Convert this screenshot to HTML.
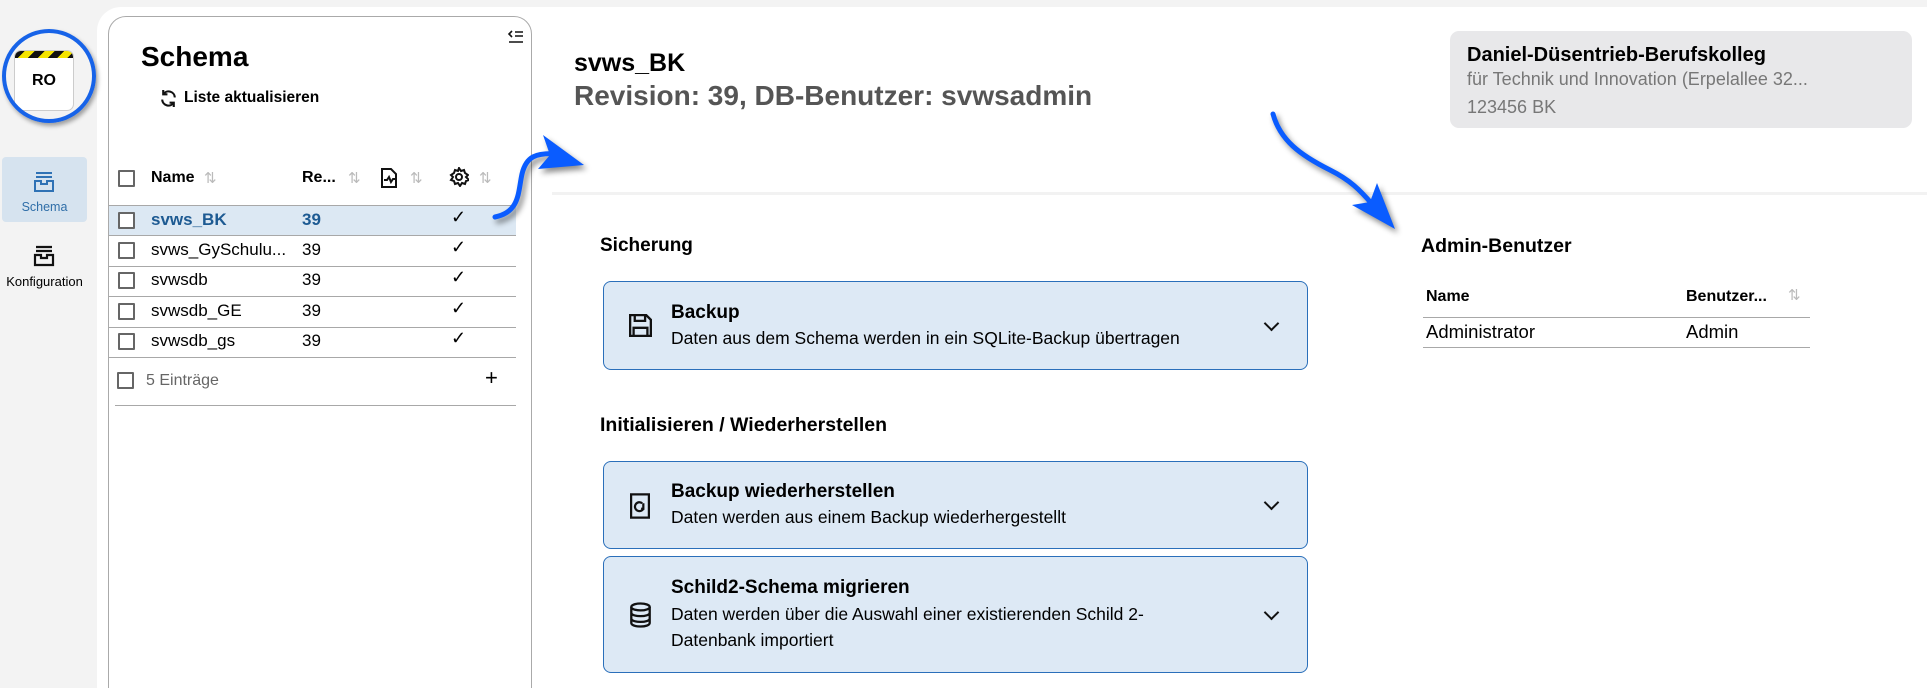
<!DOCTYPE html>
<html><head><meta charset="utf-8"><style>
*{margin:0;padding:0;box-sizing:border-box}
html,body{width:1927px;height:688px;overflow:hidden}
body{background:#f3f3f3;font-family:"Liberation Sans",sans-serif;position:relative;color:#000}
.a{position:absolute;white-space:nowrap}
.cb{position:absolute;width:17px;height:17px;border:2px solid #666;border-radius:1px;background:#fff}
.hl{position:absolute;height:1px;background:#a8a8a8}
.b{font-weight:bold}
.card{position:absolute;left:603px;width:705px;background:#dde9f5;border:1.5px solid #2a6fba;border-radius:8px}
.chev{position:absolute;right:30px;width:11px;height:11px;border-right:2px solid #111;border-bottom:2px solid #111;transform:rotate(45deg)}
.srt{position:absolute;font-size:15px;color:#bbb}
</style></head><body>
<div class="a" style="left:97px;top:7px;width:1830px;height:681px;background:#fff;border-top-left-radius:24px"></div>
<!-- sidebar -->
<div class="a" style="left:14px;top:50px;width:60px;height:61px;background:#fff;border:1px solid #ccc;border-radius:7px;overflow:hidden">
 <div style="height:7px;background:repeating-linear-gradient(135deg,#111 0 7px,#f5e400 7px 14px)"></div>
 <div style="text-align:center;font-weight:bold;font-size:16px;margin-top:14px">RO</div>
</div>
<div class="a" style="left:2px;top:29px;width:94px;height:94px;border:4px solid #1763e8;border-radius:50%;box-shadow:2px 3px 4px rgba(0,0,0,.35)"></div>
<div class="a" style="left:2px;top:157px;width:85px;height:65px;background:#d6e3ef;border-radius:4px"></div>
<svg class="a" style="left:33px;top:171px" width="22" height="22" viewBox="0 0 22 22" fill="none" stroke="#2f72b5" stroke-width="2"><path d="M3 2h16M3 6h16M2 10h6v3h6v-3h6v10H2z"/></svg>
<div class="a" style="left:0;top:200px;width:89px;text-align:center;font-size:12.5px;color:#2f6ea8">Schema</div>
<svg class="a" style="left:33px;top:245px" width="22" height="22" viewBox="0 0 22 22" fill="none" stroke="#111" stroke-width="2.2"><path d="M3 2h16M3 6h16M2 10h6v3h6v-3h6v10H2z"/></svg>
<div class="a" style="left:0;top:274px;width:89px;text-align:center;font-size:13px">Konfiguration</div>
<!-- list panel -->
<div class="a" style="left:108px;top:16px;width:424px;height:690px;background:#fff;border:1.5px solid #aaa;border-radius:18px"></div>
<div class="a b" style="left:141px;top:41px;font-size:28px">Schema</div>
<svg class="a" style="left:507px;top:29px" width="18" height="16" viewBox="0 0 18 16" fill="none" stroke="#111" stroke-width="1.6"><path d="M5 2L2 5l3 3M8 3h8M8 7h8M2 13h14"/></svg>
<svg class="a" style="left:159px;top:89px" width="19" height="19" viewBox="0 0 18 18" fill="none" stroke="#111" stroke-width="2"><path d="M15 8A6 6 0 0 0 4 5M3 10a6 6 0 0 0 11 3M4 1v4h4M14 17v-4h-4"/></svg>
<div class="a b" style="left:184px;top:89px;font-size:15.5px">Liste aktualisieren</div>
<div class="cb" style="left:118px;top:170px"></div>
<div class="a b" style="left:151px;top:169px;font-size:16px">Name</div>
<div class="srt" style="left:204px;top:169px">⇅</div>
<div class="a b" style="left:302px;top:169px;font-size:16px">Re...</div>
<div class="srt" style="left:348px;top:169px">⇅</div>
<svg class="a" style="left:380px;top:168px" width="18" height="20" viewBox="0 0 18 20" fill="none" stroke="#111" stroke-width="2"><path d="M2 1h9l5 5v13H2zM4 12h3l2-3 2 5 2-3h2"/></svg>
<div class="srt" style="left:410px;top:169px">⇅</div>
<svg class="a" style="left:449px;top:167px" width="20" height="20" viewBox="0 0 20 20" fill="none" stroke="#111" stroke-width="2"><circle cx="10" cy="10" r="3"/><path d="M10 1l2 3 3-1 1 3 3 2-2 2 3 3-3 1-1 3-3-1-2 3-2-3-3 1-1-3-3-1 2-3-2-2 3-2 1-3 3 1z"/></svg>
<div class="srt" style="left:479px;top:169px">⇅</div>
<div class="hl" style="left:109px;top:205px;width:407px"></div>
<div class="a" style="left:109px;top:206px;width:407px;height:29px;background:#dce8f3"></div>
<div class="hl" style="left:109px;top:235px;width:407px"></div>
<div class="hl" style="left:109px;top:266px;width:407px"></div>
<div class="hl" style="left:109px;top:296px;width:407px"></div>
<div class="hl" style="left:109px;top:327px;width:407px"></div>
<div class="hl" style="left:109px;top:357px;width:407px"></div>
<div class="hl" style="left:115px;top:405px;width:401px"></div>
<div class="cb" style="left:118px;top:212px"></div><div class="a b" style="left:151px;top:210px;font-size:17px;color:#1d5a92">svws_BK</div><div class="a b" style="left:302px;top:210px;font-size:17px;color:#1d5a92">39</div><div class="a" style="left:451px;top:207px;font-size:18px">✓</div>
<div class="cb" style="left:118px;top:242px"></div><div class="a" style="left:151px;top:240px;font-size:17px">svws_GySchulu...</div><div class="a" style="left:302px;top:240px;font-size:17px">39</div><div class="a" style="left:451px;top:237px;font-size:18px">✓</div>
<div class="cb" style="left:118px;top:272px"></div><div class="a" style="left:151px;top:270px;font-size:17px">svwsdb</div><div class="a" style="left:302px;top:270px;font-size:17px">39</div><div class="a" style="left:451px;top:267px;font-size:18px">✓</div>
<div class="cb" style="left:118px;top:303px"></div><div class="a" style="left:151px;top:301px;font-size:17px">svwsdb_GE</div><div class="a" style="left:302px;top:301px;font-size:17px">39</div><div class="a" style="left:451px;top:298px;font-size:18px">✓</div>
<div class="cb" style="left:118px;top:333px"></div><div class="a" style="left:151px;top:331px;font-size:17px">svwsdb_gs</div><div class="a" style="left:302px;top:331px;font-size:17px">39</div><div class="a" style="left:451px;top:328px;font-size:18px">✓</div>
<div class="cb" style="left:117px;top:372px"></div><div class="a" style="left:146px;top:372px;font-size:16px;color:#666">5 Einträge</div>
<div class="a" style="left:485px;top:365px;font-size:22px">+</div>
<!-- header -->
<div class="a b" style="left:574px;top:49px;font-size:25px">svws_BK</div>
<div class="a b" style="left:574px;top:80px;font-size:28px;color:#555">Revision: 39, DB-Benutzer: svwsadmin</div>
<div class="a" style="left:1450px;top:31px;width:462px;height:97px;background:#e8e8ea;border-radius:9px"></div>
<div class="a b" style="left:1467px;top:44px;font-size:20px">Daniel-Düsentrieb-Berufskolleg</div>
<div class="a" style="left:1467px;top:69px;font-size:18px;color:#777">für Technik und Innovation (Erpelallee 32...</div>
<div class="a" style="left:1467px;top:97px;font-size:18px;color:#777">123456 BK</div>
<div class="a" style="left:552px;top:192px;width:1375px;height:3px;background:#f2f2f2"></div>
<!-- sections -->
<div class="a b" style="left:600px;top:235px;font-size:19px">Sicherung</div>
<div class="card" style="top:281px;height:89px">
 <svg class="a" style="left:25px;top:32px" width="23" height="23" viewBox="0 0 20 20" fill="none" stroke="#111" stroke-width="2"><path d="M1 1h14l4 4v14H1zM5 1v5h9V1M4 19v-7h12v7"/></svg>
 <div class="a b" style="left:67px;top:20px;font-size:19px">Backup</div>
 <div class="a" style="left:67px;top:46px;font-size:17.5px">Daten aus dem Schema werden in ein SQLite-Backup übertragen</div>
 <div class="chev" style="top:36px"></div>
</div>
<div class="a b" style="left:600px;top:414px;font-size:19.5px">Initialisieren / Wiederherstellen</div>
<div class="card" style="top:461px;height:88px">
 <svg class="a" style="left:26px;top:31px" width="20" height="26" viewBox="0 0 18 23" fill="none" stroke="#111" stroke-width="2"><path d="M1 1h16v21H1z"/><path d="M12 14a4 4 0 1 1-1-5M12 9v5h-2"/></svg>
 <div class="a b" style="left:67px;top:19px;font-size:19px">Backup wiederherstellen</div>
 <div class="a" style="left:67px;top:45px;font-size:17.5px">Daten werden aus einem Backup wiederhergestellt</div>
 <div class="chev" style="top:35px"></div>
</div>
<div class="card" style="top:556px;height:117px">
 <svg class="a" style="left:25px;top:45px" width="23" height="26" viewBox="0 0 20 22" fill="none" stroke="#111" stroke-width="2"><ellipse cx="10" cy="4" rx="8" ry="3"/><path d="M2 4v14c0 2 4 3 8 3s8-1 8-3V4M2 9c0 2 4 3 8 3s8-1 8-3M2 14c0 2 4 3 8 3s8-1 8-3"/></svg>
 <div class="a b" style="left:67px;top:20px;font-size:19px">Schild2-Schema migrieren</div>
 <div class="a" style="left:67px;top:47px;font-size:17.5px">Daten werden über die Auswahl einer existierenden Schild 2-</div>
 <div class="a" style="left:67px;top:73px;font-size:17.5px">Datenbank importiert</div>
 <div class="chev" style="top:50px"></div>
</div>
<!-- admin -->
<div class="a b" style="left:1421px;top:235px;font-size:19.5px">Admin-Benutzer</div>
<div class="a b" style="left:1426px;top:288px;font-size:16px">Name</div>
<div class="a b" style="left:1686px;top:288px;font-size:16px">Benutzer...</div>
<div class="a" style="left:1788px;top:286px;font-size:15px;color:#bbb">⇅</div>
<div class="hl" style="left:1423px;top:317px;width:387px"></div>
<div class="a" style="left:1426px;top:321px;font-size:18.5px">Administrator</div>
<div class="a" style="left:1686px;top:321px;font-size:18.5px">Admin</div>
<div class="hl" style="left:1423px;top:347px;width:387px"></div>
<!-- arrows -->
<svg class="a" style="left:0;top:0;filter:drop-shadow(3px 4px 3px rgba(0,0,0,.45))" width="1927" height="688">
 <path d="M495 217C520 212 518 192 522 174C526 157 535 152 560 154" fill="none" stroke="#0a5cff" stroke-width="5" stroke-linecap="round"/>
 <path d="M543 135L584 165L538 169L550 155z" fill="#0a5cff"/>
 <path d="M1273 114C1280 140 1300 155 1330 170C1350 180 1360 190 1372 204" fill="none" stroke="#0a5cff" stroke-width="5" stroke-linecap="round"/>
 <path d="M1377 183L1395 229L1352 205L1370 202z" fill="#0a5cff"/>
</svg>
</body></html>
